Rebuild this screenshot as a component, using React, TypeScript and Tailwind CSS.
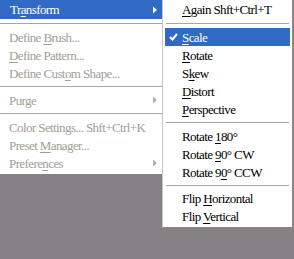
import React from 'react';

const U = ({ children }: { children: React.ReactNode }) => (
  <span className="underline underline-offset-2 decoration-1">{children}</span>
);

const Arrow = ({ color }: { color: string }) => (
  <svg width="4" height="7" viewBox="0 0 4 7" className="absolute right-[5px] top-1/2 -translate-y-1/2">
    <polygon points="0,0 4,3.5 0,7" fill={color} />
  </svg>
);

const Check = () => (
  <svg width="9" height="8" viewBox="0 0 9 8" className="absolute left-[4px] top-1/2 -translate-y-1/2">
    <polyline points="1,4 3.5,6.5 8,1" fill="none" stroke="white" strokeWidth="2" />
  </svg>
);

const Sep = ({ h, inset }: { h: string; inset?: boolean }) => (
  <div className={`${h} flex items-center ${inset ? 'px-[3px]' : ''}`}>
    <div className="h-px w-full bg-[#a9a6a0]" />
  </div>
);

const Row = ({ children, pl, arrow }: { children: React.ReactNode; pl: string; arrow?: string }) => (
  <div className={`relative h-[18px] flex items-center ${pl}`}>
    <span className="whitespace-pre">{children}</span>
    {arrow && <Arrow color={arrow} />}
  </div>
);

const App: React.FC = () => {
  return (
    <div
      className="relative w-[294px] h-[259px] bg-[#858285] overflow-hidden text-[13px] tracking-[-0.6px] leading-none"
      style={{ fontFamily: '"Liberation Serif", "Times New Roman", serif' }}
    >
      {/* main menu */}
      <div className="w-[162px] bg-white pb-[2px] text-[#a39e96]">
        <div className="relative h-[19px] flex items-center pl-[10px] bg-[#316ac5] text-white">
          <span>Tr<U>a</U>nsform</span>
          <Arrow color="white" />
        </div>
        <Sep h="h-[9px]" />
        <Row pl="pl-[9px]">Define <U>B</U>rush...</Row>
        <Row pl="pl-[9px]"><U>D</U>efine Pattern...</Row>
        <Row pl="pl-[9px]">Define Cust<U>o</U>m Shape...</Row>
        <Sep h="h-[9px]" />
        <Row pl="pl-[9px]" arrow="#b5b1aa">Pur<U>g</U>e</Row>
        <Sep h="h-[9px]" />
        <Row pl="pl-[9px]">Color Settings... Shft+Ctrl+K</Row>
        <Row pl="pl-[9px]">Preset <U>M</U>anager...</Row>
        <Row pl="pl-[9px]" arrow="#b5b1aa">Prefere<U>n</U>ces</Row>
      </div>

      {/* submenu */}
      <div className="absolute left-[162px] top-0 w-[131px] h-[228px] bg-white border-l border-[#c9c6c0] border-r border-b border-r-[#8a8888] border-b-[#8a8888] text-black">
        <Row pl="pl-[19px]"><U>A</U>gain Shft+Ctrl+T</Row>
        <Sep h="h-[10px]" inset />
        <div className="relative mx-[2px] h-[18px] flex items-center pl-[17px] bg-[#316ac5] text-white">
          <Check />
          <span><U>S</U>cale</span>
        </div>
        <Row pl="pl-[19px]"><U>R</U>otate</Row>
        <Row pl="pl-[19px]">S<U>k</U>ew</Row>
        <Row pl="pl-[19px]"><U>D</U>istort</Row>
        <Row pl="pl-[19px]"><U>P</U>erspective</Row>
        <Sep h="h-[9px]" inset />
        <Row pl="pl-[19px]">Rotate <U>1</U>80°</Row>
        <Row pl="pl-[19px]">Rotate <U>9</U>0° CW</Row>
        <Row pl="pl-[19px]">Rotate 9<U>0</U>° CCW</Row>
        <Sep h="h-[8px]" inset />
        <Row pl="pl-[19px]">Flip <U>H</U>orizontal</Row>
        <Row pl="pl-[19px]">Flip <U>V</U>ertical</Row>
      </div>
    </div>
  );
};

export default App;
